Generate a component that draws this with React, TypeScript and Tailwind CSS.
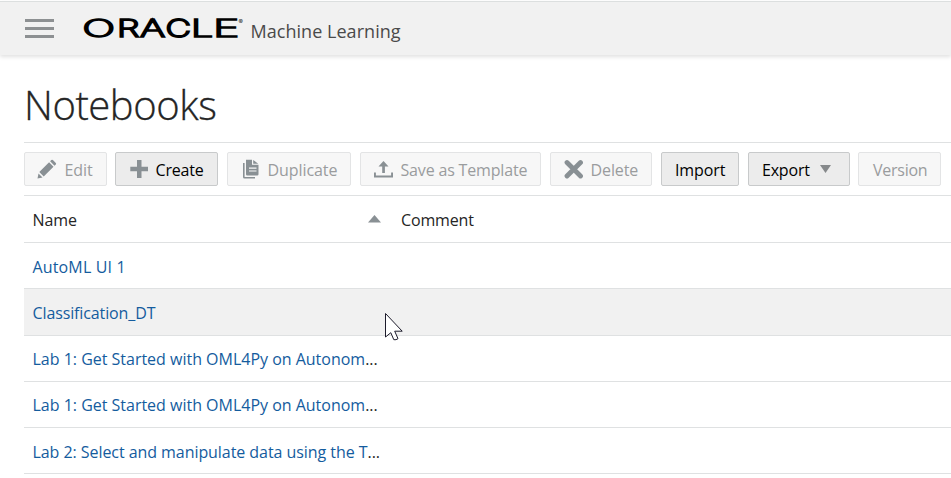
import type { ReactNode } from "react";

const font = "font-['Open_Sans','Noto_Sans',sans-serif]";

const letters = [
  { ch: "O", x: -0.7, s: 1.82 },
  { ch: "R", x: 34, s: 1.5 },
  { ch: "A", x: 57, s: 1.6 },
  { ch: "C", x: 82.5, s: 1.46 },
  { ch: "L", x: 108, s: 1.64 },
  { ch: "E", x: 130, s: 1.86 },
];

function Logo() {
  return (
    <svg width="164" height="44" viewBox="0 -10 164 44" className="block font-['Inter',sans-serif]">
      {letters.map((l) => (
        <text
          key={l.ch}
          transform={`translate(${l.x} 20) scale(${l.s} 1)`}
          fontSize="24"
          fontWeight="200"
          stroke="#000"
          strokeWidth="2.2"
          vectorEffect="non-scaling-stroke"
        >
          {l.ch}
        </text>
      ))}
      <text x="155.500" y="6.500" fontSize="6.500" fill="#222">®</text>
    </svg>
  );
}

function Pencil() {
  return (
    <svg width="20" height="20" viewBox="0 0 20 20" fill="#899094">
      <path d="M2.3 13.1 12.1 3.3l4.4 4.4-9.8 9.8zM13.1 2.3l1.2-1.2q.8-.7 1.6 0l2.9 2.9q.7.8 0 1.6l-1.3 1.2zM1.5 14.4l4 4-5 1z" />
    </svg>
  );
}
function Plus() {
  return (
    <svg width="20" height="20" viewBox="0 0 20 20" fill="#899094">
      <path d="M9 1h4.500v6.800h7v4.400h-7V19H9v-6.800H2.300V7.800H9z" />
    </svg>
  );
}
function Duplicate() {
  return (
    <svg width="20" height="20" viewBox="0 0 20 20" fill="#899094">
      <path d="M3 4h1.600v14H15v1.500H4.500Q3 19.500 3 18z" />
      <path d="M6 .7h6v5h6.500v9.500q0 1.300-1.300 1.300H7.200Q6 16.500 6 15.300z" />
      <path d="M13.200.9 18.200 4.800h-5z" />
      <path d="M9 9.200h7.500M9 12h7.500" stroke="#f7f7f7" strokeWidth="1.200" />
    </svg>
  );
}
function Upload() {
  return (
    <svg width="20" height="20" viewBox="0 0 20 20" fill="#899094">
      <path d="M10.500 2 15.500 7.500h-3.600V14H9.200V7.500H5.500zM1 13.500h1.900v3h15.200v-3H20v5H1z" />
    </svg>
  );
}
function Cross() {
  return (
    <svg width="20" height="20" viewBox="0 0 20 20">
      <path d="M4 3.500 17.500 17M17.500 3.500 4 17" stroke="#899094" strokeWidth="4.800" strokeLinecap="round" />
    </svg>
  );
}

function Button({ width, on, icon, after, label, text }: {
  width: string; on?: boolean; icon?: ReactNode; after?: ReactNode; label: string; text: string;
}) {
  return (
    <button
      className={`flex h-[34px] shrink-0 items-center rounded-[2px] border text-[16px] ${width} ${
        icon ? "pl-3" : "pl-[13px]"
      } ${
        on ? "border-[#c8cacb] bg-[#ececec] text-black" : "border-[#e3e4e5] bg-[#f7f7f7] text-[#9a9c9e]"
      }`}
    >
      {icon && <span className="mr-[7.5px] h-5 w-5 shrink-0">{icon}</span>}
      <span className={`pt-[2px] whitespace-nowrap ${text}`}>{label}</span>
      {after}
    </button>
  );
}

const rows = [
  { name: "AutoML UI 1", h: "h-[46px] pt-[3px]", track: "tracking-[0.15px]" },
  { name: "Classification_DT", h: "h-[47px] bg-[#f1f1f1] pt-px", track: "tracking-[-0.12px]" },
  { name: "Lab 1: Get Started with OML4Py on Autonom", cut: true, h: "h-[46px] pt-px", track: "tracking-[-0.01px]" },
  { name: "Lab 1: Get Started with OML4Py on Autonom", cut: true, h: "h-[46px] pt-px", track: "tracking-[-0.01px]" },
  { name: "Lab 2: Select and manipulate data using the T", cut: true, h: "h-[46px] pt-[3px]", track: "tracking-[-0.06px]" },
];

export default function App() {
  return (
    <div className={`relative h-[478px] w-[951px] overflow-hidden bg-white text-[#252525] ${font}`}>
      <div className="h-px bg-white" />
      <header className="flex h-[54px] items-start border-t border-[#dcdfdf] bg-[#f1f1f1] shadow-[0_2px_4px_rgba(0,0,0,0.12)]">
        <button aria-label="Menu" className="mt-[17px] ml-[25px] flex w-[29px] flex-col gap-[5px]">
          <span className="h-[3px] bg-[#8d9092]" />
          <span className="h-[3px] bg-[#8d9092]" />
          <span className="h-[3px] bg-[#8d9092]" />
        </button>
        <div className="mt-[5px] ml-[29px]"><Logo /></div>
        <span className="mt-[15px] ml-[3.5px] text-[18px] leading-[28px] whitespace-nowrap text-[#4a4a4a] tracking-[0.04px]">
          Machine Learning
        </span>
      </header>
      <main className="pl-6">
        <h1 className="flex h-[88px] items-center border-b border-[#dfe1e2] pt-[13px] text-[40px] font-light">
          <span className="tracking-[-0.45px] [-webkit-text-stroke:0.3px_#252525]">Notebooks</span>
        </h1>
        <div className="flex h-[53px] items-center border-b border-[#dfe1e2]">
          <div className="flex pb-px">
            <Button width="mr-2 w-[83px]" icon={<Pencil />} label="Edit" text="tracking-[-0.1px]" />
            <Button width="mr-[9px] w-[103px]" on icon={<Plus />} label="Create" text="tracking-[-0.2px]" />
            <Button width="mr-[9px] w-[124px]" icon={<Duplicate />} label="Duplicate" text="tracking-[-0.08px]" />
            <Button width="mr-[9px] w-[181px]" icon={<Upload />} label="Save as Template" text="tracking-[-0.17px]" />
            <Button width="mr-[9px] w-[102px]" icon={<Cross />} label="Delete" text="tracking-[-0.1px]" />
            <Button width="mr-[9px] w-[78px]" on label="Import" text="tracking-[-0.1px]" />
            <Button
              width="mr-2 w-[102px]"
              on
              label="Export"
              text="w-[58px] text-left tracking-[-0.2px]"
              after={<svg width="11" height="8" viewBox="0 0 11 8" className="mt-px"><path d="M0 0h11L5.500 8z" fill="#86898b" /></svg>}
            />
            <Button width="w-[83px]" label="Version" text="pl-px tracking-[-0.25px]" />
          </div>
        </div>
        <div className="flex h-[47px] items-center border-b border-[#dfe1e2] pt-px pl-[8.5px] text-[16px]">
          <span className="w-[335.5px] tracking-[-0.1px]">Name</span>
          <svg width="13" height="8" viewBox="0 0 13 8" className="mr-[20px] -mt-[2px]"><path d="M0 7.500h13L6.500 0z" fill="#899094" /></svg>
          <span className="tracking-[-0.15px]">Comment</span>
        </div>
        {rows.map((r, i) => (
          <div key={i} className={`flex items-center border-b border-[#dfe1e2] pl-[8.5px] text-[16px] ${r.h}`}>
            <a className={`whitespace-nowrap text-[#145c9e] ${r.track}`}>{r.name}</a>
            {r.cut && <span className="text-[#252525]">...</span>}
          </div>
        ))}
      </main>
      <svg width="19" height="28" viewBox="0 0 19 28" className="absolute top-[313px] left-[385px]">
        <path d="M.5.5v23.500l5.300-4.300 3 7h2.200l2-1-3.300-7.500h7.500z" fill="#fff" stroke="#1c1b2b" />
      </svg>
    </div>
  );
}
